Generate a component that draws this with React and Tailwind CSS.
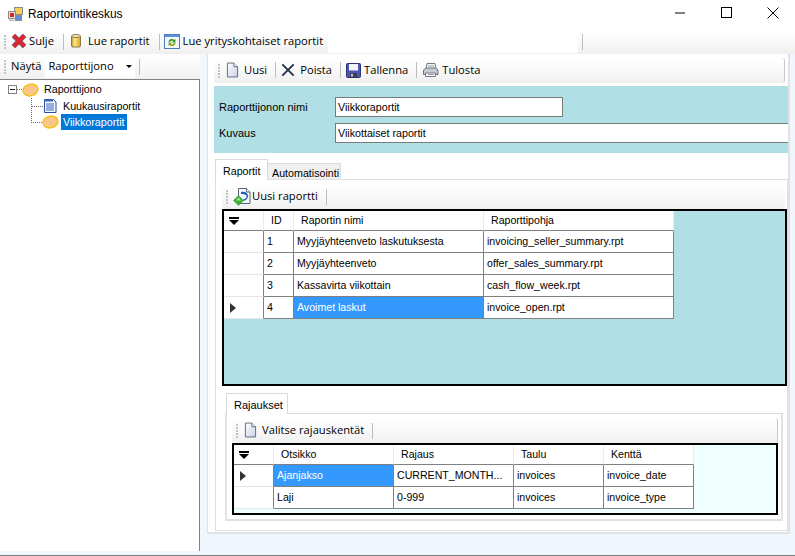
import React from "react";

const seg = "font-['Open_Sans','Liberation_Sans',sans-serif] text-[11.2px] text-black";

const Grip = () => (
  <div className="flex flex-col gap-[1px] mr-[3px] ml-[1px] shrink-0">
    {[0, 1, 2, 3, 4].map((i) => (
      <div key={i} className="w-[2px] h-[2px] bg-[#c4c4c4]" />
    ))}
  </div>
);
const Sep = () => <div className="w-px h-[16px] bg-[#bdbdbd] ml-[8px] mr-[5px] shrink-0" />;

const DocIcon = () => (
  <svg width="13" height="16" viewBox="0 0 14 16" className="shrink-0">
    <defs>
      <linearGradient id="dg" x1="0" y1="0" x2="1" y2="1">
        <stop offset="0" stopColor="#ffffff" />
        <stop offset="1" stopColor="#c9d3e6" />
      </linearGradient>
    </defs>
    <path d="M1.500.500h7l4 4v11h-11z" fill="url(#dg)" stroke="#5a6478" />
    <path d="M8.500.500v4h4" fill="#fff" stroke="#5a6478" />
  </svg>
);
const XIcon = () => (
  <svg width="14" height="14" viewBox="0 0 16 16" className="shrink-0">
    <path d="M1.500 1.500l13 13M14.500 1.500l-13 13" stroke="#1d2b44" strokeWidth="2" />
  </svg>
);
const RedX = () => (
  <svg width="16" height="16" viewBox="0 0 16 16" className="shrink-0">
    <path d="M2.500 2.500l11 11M13.500 2.500l-11 11" stroke="#6f5a70" strokeWidth="5" />
    <path d="M2.500 2.500l11 11M13.500 2.500l-11 11" stroke="#e0262c" strokeWidth="3.200" />
  </svg>
);
const Cyl = () => (
  <svg width="10" height="14" viewBox="0 0 10 14" className="shrink-0">
    <defs>
      <linearGradient id="cy" x1="0" y1="0" x2="1" y2="0">
        <stop offset="0" stopColor="#c9982a" />
        <stop offset="0.35" stopColor="#fbe88a" />
        <stop offset="1" stopColor="#d8a522" />
      </linearGradient>
    </defs>
    <rect x="0.500" y="1.500" width="9" height="11.500" rx="1.500" fill="url(#cy)" stroke="#8a7440" />
    <ellipse cx="5" cy="2" rx="4.500" ry="1.500" fill="#f6edc4" stroke="#8a7440" />
  </svg>
);
const Refresh = () => (
  <svg width="16" height="16" viewBox="0 0 16 16" className="shrink-0">
    <rect x="0.500" y="1.500" width="15" height="14" fill="#f1f7fd" stroke="#4d7cb5" />
    <rect x="1" y="2" width="14" height="2" fill="#5b93d6" />
    <path d="M4.500 9a3.500 3.500 0 0 1 6-2l1-1v3.500H8l1.300-1.200A2 2 0 0 0 6 9z" fill="#3f9b2b" />
    <path d="M11.500 10a3.500 3.500 0 0 1-6 2l-1 1V9.500H8L6.700 10.700A2 2 0 0 0 10 10z" fill="#7fa81f" />
  </svg>
);
const Save = () => (
  <svg width="15" height="15" viewBox="0 0 15 15" className="shrink-0">
    <rect x="0.500" y="0.500" width="14" height="14" rx="1" fill="#4a55b5" stroke="#2c3370" />
    <rect x="3" y="1" width="9" height="6.500" fill="#f2f3fb" />
    <rect x="4" y="10" width="7" height="4.500" fill="#3a3f57" />
    <rect x="5" y="11" width="2" height="2.500" fill="#c5c9d8" />
  </svg>
);
const Printer = () => (
  <svg width="17" height="16" viewBox="0 0 17 16" className="shrink-0">
    <path d="M5 1.500h8l1 5H4z" fill="#f4f5f7" stroke="#737a85" />
    <path d="M1.500 8l2.500-2h10l2 2v4.500h-14.500z" fill="#c6cbd2" stroke="#6b717b" />
    <path d="M3.500 11h10v3.500h-10z" fill="#fff" stroke="#737a85" />
    <path d="M6 4h6M6 12.500h6" stroke="#9aa0aa" />
  </svg>
);
const NewReport = () => (
  <svg width="18" height="18" viewBox="0 0 18 18" className="shrink-0">
    <path d="M5.500.500h8l3.500 3.500v11.500h-11.500z" fill="#f4f7fc" stroke="#5a6478" />
    <path d="M13.500.500v3.500h3.500" fill="#fff" stroke="#5a6478" />
    <path d="M8 4c4-1 7 1 7 4s-3 5-6 5l2-2c2 0 2.500-1.500 2.500-3S11 6 8 6z" fill="#1d5fb4" />
    <path d="M5.500 7.500L10.500 12.500 5.500 17.500 .500 12.500z" fill="#3fae3a" stroke="#2a8a2a" strokeWidth="0.500" />
    <path d="M5.500 9.500L8 12.500H3z" fill="#a5e58c" />
  </svg>
);
const Oval = () => (
  <svg width="17" height="14" viewBox="0 0 17 14" className="shrink-0">
    <ellipse cx="8.500" cy="7" rx="7.500" ry="5.800" fill="#fbc687" stroke="#f5c211" strokeWidth="1.400" transform="rotate(-14 8.500 7)" />
  </svg>
);
const ReportIcon = () => (
  <svg width="14" height="14" viewBox="0 0 14 14" className="shrink-0">
    <path d="M1.500.500h9l2.500 2.500v10.500h-11.500z" fill="#f4f7fd" stroke="#2c4e9c" />
    <path d="M3 5h8M3 7h8M3 9h8M3 11h8" stroke="#3f66bd" />
    <path d="M1 .500h9v2H1z" fill="#3f66bd" />
  </svg>
);
const AppIcon = () => (
  <svg width="15" height="15" viewBox="0 0 15 15" className="shrink-0">
    <rect x="6.500" y="0.500" width="8" height="7" fill="#f7cd52" stroke="#8c8c8c" />
    <rect x="0.500" y="4.500" width="7" height="7" fill="#e5e5e5" stroke="#8c8c8c" />
    <rect x="2" y="6" width="4" height="4" fill="#d9271f" />
    <rect x="7.500" y="8.500" width="6" height="5" fill="#5f8fd8" stroke="#8c8c8c" />
    <rect x="1" y="12.500" width="5" height="1.500" fill="#b5b5b5" />
  </svg>
);
const SortMark = () => (
  <div className="flex flex-col items-center w-[10px]">
    <div className="w-[10px] h-[2px] bg-black" />
    <div className="w-0 h-0 mt-[1px] border-l-[5px] border-r-[5px] border-t-[5px] border-l-transparent border-r-transparent border-t-black" />
  </div>
);
const RowArrow = () => (
  <div className="w-0 h-0 border-t-[5px] border-b-[5px] border-l-[6px] border-t-transparent border-b-transparent border-l-[#333]" />
);

const Tool = ({ icon, label, gap = "gap-[4px]" }) => (
  <div className={`flex items-center ${gap} shrink-0`}>
    {icon}
    <span className="whitespace-nowrap">{label}</span>
  </div>
);

const barBg = "bg-gradient-to-b from-[#ffffff] via-[#f9f9f9] to-[#efefef]";

function Grid({ cols, headers, rows, selected, current, bg, height }) {
  const tmpl = { gridTemplateColumns: cols.map((c) => c + "px").join(" ") };
  return (
    <div className={`border-2 border-black ${bg} ${height} shrink-0 font-['Liberation_Sans',sans-serif] text-[10.6px] text-black`}>
      <div className="grid w-max" style={tmpl}>
        <div className="h-[20px] bg-white border-r border-[#ececec] border-b border-b-[#808080] pl-[5px] pt-[6px]">
          <SortMark />
        </div>
        {headers.map((h) => (
          <div
            key={h}
            className="h-[20px] bg-white border-r border-[#ececec] border-b border-b-[#808080] pl-[7px] pt-[1px] flex items-center whitespace-nowrap"
          >
            {h}
          </div>
        ))}
        {rows.map((r, ri) => (
          <React.Fragment key={ri}>
            <div className="h-[22px] bg-white border-r border-[#808080] border-b border-b-[#e6e6e6] flex items-center pl-[6px]">
              {ri === current && <RowArrow />}
            </div>
            {r.map((c, ci) => (
              <div
                key={ci}
                className={`h-[22px] border-r border-b border-[#808080] flex items-center pl-[3px] whitespace-nowrap overflow-hidden ${
                  selected && selected[0] === ri && selected[1] === ci ? "bg-[#3399ff] text-white" : "bg-white"
                }`}
              >
                {c}
              </div>
            ))}
          </React.Fragment>
        ))}
      </div>
    </div>
  );
}

export default function App() {
  return (
    <div className="w-[795px] h-[556px] overflow-hidden bg-[#eff6fd] flex flex-col font-['Liberation_Sans',sans-serif] text-[10.7px] text-black">
      {/* Title bar */}
      <div className="h-[29px] bg-white flex items-center shrink-0">
        <div className="ml-[8px] mr-[5px]"><AppIcon /></div>
        <span className="text-[11.900px]">Raportointikeskus</span>
        <div className="ml-auto flex items-center">
          <svg width="12" height="12" viewBox="0 0 12 12" className="mr-[35px] -mt-[4px]"><path d="M1 6h10" stroke="#000" strokeWidth="1" /></svg>
          <svg width="11" height="11" viewBox="0 0 11 11" className="mr-[35px] -mt-[4px]"><rect x="0.500" y="0.500" width="10" height="10" fill="none" stroke="#000" /></svg>
          <svg width="12" height="12" viewBox="0 0 12 12" className="mr-[16px] -mt-[4px]"><path d="M.5.500l11 11M11.500.500l-11 11" stroke="#000" /></svg>
        </div>
      </div>

      {/* Main toolbar */}
      <div className={`h-[25px] ${barBg} flex items-center shrink-0 ${seg}`}>
        <div className="pl-[3px] h-full flex items-center">
          <Grip />
        </div>
        <div className="flex items-center h-full w-[319px] pl-[2px]">
          <Tool icon={<RedX />} label="Sulje" gap="gap-[2px]" />
          <div className="w-px h-[16px] bg-[#bdbdbd] ml-[9px] mr-[7px]" />
          <Tool icon={<Cyl />} label="Lue raportit" gap="gap-[7px]" />
          <div className="w-px h-[16px] bg-[#bdbdbd] ml-[9px] mr-[4px]" />
          <Tool icon={<Refresh />} label="Lue yrityskohtaiset raportit" gap="gap-[3px]" />
        </div>
        <div className="w-[250px] h-[23px] bg-white" />
        <div className="w-px h-[16px] bg-[#bdbdbd] ml-[4px]" />
      </div>

      {/* Body */}
      <div className="flex flex-1 min-h-0">
        {/* Left */}
        <div className="w-[200px] shrink-0 flex flex-col">
          <div className={`h-[25px] ${barBg} flex items-center pl-[3px] shrink-0 ${seg}`}>
            <Grip />
            <span className="ml-[2px]">Näytä</span>
            <div className="ml-[4px] w-[90px] h-[23px] bg-white flex items-center pl-[3px] relative">
              Raporttijono
              <div className="absolute left-[81px] top-[10px] w-0 h-0 border-l-[3px] border-r-[3px] border-t-[3px] border-l-transparent border-r-transparent border-t-black" />
            </div>
            <div className="w-px h-[16px] bg-[#bdbdbd] ml-[4px]" />
          </div>
          <div className="h-[472px] bg-white border-t border-r border-[#808080] pt-[1px] relative">
            <div className="flex items-center h-[17px] pl-[8px]">
              <div className="w-[9px] h-[9px] border border-[#808080] flex items-center justify-center shrink-0 bg-white">
                <div className="w-[5px] h-px bg-[#222]" />
              </div>
              <div className="w-[5px] border-t border-dotted border-[#666]" />
              <Oval />
              <span className="ml-[5px]">Raporttijono</span>
            </div>
            <div className="flex items-center h-[16px] pl-[31px]">
              <div className="w-[12px] border-t border-dotted border-[#666]" />
              <ReportIcon />
              <span className="ml-[6px]">Kuukausiraportit</span>
            </div>
            <div className="flex items-center h-[16px] pl-[31px]">
              <div className="w-[11px] border-t border-dotted border-[#666]" />
              <Oval />
              <span className="ml-[2px] bg-[#0078d7] text-white px-[2px] h-[16px] leading-[16px]">Viikkoraportit</span>
            </div>
            <div className="absolute left-[31px] top-[18px] h-[25px] border-l border-dotted border-[#666]" />
          </div>
        </div>

        {/* Right */}
        <div className="w-[583px] ml-[7px] h-[480px] bg-white border-r-2 border-b-2 border-l border-[#e2e2e2] flex flex-col pl-[6px]">
          <div className={`mt-[4px] mr-[3px] h-[25px] rounded-[3px] ${barBg} border-r border-[#c8c8c8] flex items-center pl-[3px] shrink-0 ${seg}`}>
            <Grip />
            <div className="ml-[3px] flex items-center">
              <Tool icon={<DocIcon />} label="Uusi" gap="gap-[5px]" />
              <Sep />
              <Tool icon={<XIcon />} label="Poista" gap="gap-[5px]" />
              <Sep />
              <Tool icon={<Save />} label="Tallenna" gap="gap-[3px]" />
              <Sep />
              <Tool icon={<Printer />} label="Tulosta" gap="gap-[3px]" />
            </div>
          </div>

          <div className="mt-[3px] h-[67px] bg-[#b0dfe5] pl-[5px] pt-[11px] flex flex-col gap-[6px] shrink-0">
            <div className="flex items-center h-[20px]">
              <span className="w-[116px] text-[11px]">Raporttijonon nimi</span>
              <div className="w-[228px] h-[20px] bg-white border border-[#7a7a7a] pl-[2px] leading-[18px]">Viikkoraportit</div>
            </div>
            <div className="flex items-center h-[20px]">
              <span className="w-[116px] text-[11px]">Kuvaus</span>
              <div className="flex-1 h-[20px] bg-white border-y border-l border-[#7a7a7a] pl-[2px] leading-[18px]">Viikottaiset raportit</div>
            </div>
          </div>

          {/* Tabs */}
          <div className="mt-[6px] flex items-end h-[21px] shrink-0 pl-[1px]">
            <div className="w-[53px] h-[21px] bg-white border-x border-t border-[#d9d9d9] pl-[7px] pt-[3px] relative z-10">Raportit</div>
            <div className="w-[73px] h-[17px] bg-[#f0f0f0] border-r border-t border-b border-[#d9d9d9] pl-[4px] pt-[1px]">Automatisointi</div>
          </div>
          <div className="ml-[1px] border border-[#e0e0e0] -mt-[1px] h-[352px] pl-[6px] flex flex-col">
            <div className={`mt-[4px] mr-[2px] h-[25px] rounded-[3px] ${barBg} flex items-center pl-[3px] shrink-0 ${seg}`}>
              <Grip />
              <div className="ml-[2px]"><Tool icon={<NewReport />} label="Uusi raportti" gap="gap-[1px]" /></div>
              <Sep />
            </div>
            <Grid
              cols={[40, 30, 190, 190]}
              headers={["ID", "Raportin nimi", "Raporttipohja"]}
              rows={[
                ["1", "Myyjäyhteenveto laskutuksesta", "invoicing_seller_summary.rpt"],
                ["2", "Myyjäyhteenveto", "offer_sales_summary.rpt"],
                ["3", "Kassavirta viikottain", "cash_flow_week.rpt"],
                ["4", "Avoimet laskut", "invoice_open.rpt"],
              ]}
              selected={[3, 1]}
              current={3}
              bg="bg-[#b0dfe5]"
              height="h-[177px]"
            />
            {/* Sub tabs */}
            <div className="mt-[7px] ml-[4px] w-[62px] h-[21px] bg-white border-x border-t border-[#d9d9d9] pl-[7px] pt-[3px] shrink-0 relative z-10 text-[11px]">Rajaukset</div>
            <div className="ml-[3px] mr-[4px] -mt-[1px] h-[108px] border-2 border-[#e2e2e2] border-t border-t-[#d9d9d9] pl-[5px] pr-[3px] flex flex-col">
              <div className={`mt-[4px] h-[25px] rounded-[3px] ${barBg} border-r border-[#c8c8c8] flex items-center pl-[3px] shrink-0 ${seg}`}>
                <Grip />
                <div className="ml-[3px]"><Tool icon={<DocIcon />} label="Valitse rajauskentät" gap="gap-[5px]" /></div>
                <Sep />
              </div>
              <Grid
                cols={[40, 120, 120, 90, 90]}
                headers={["Otsikko", "Rajaus", "Taulu", "Kenttä"]}
                rows={[
                  ["Ajanjakso", "CURRENT_MONTH...", "invoices", "invoice_date"],
                  ["Laji", "0-999", "invoices", "invoice_type"],
                ]}
                selected={[0, 0]}
                current={0}
                bg="bg-[#f0ffff]"
                height="h-[72px]"
              />
            </div>
          </div>
        </div>
      </div>
      <div className="h-[1px] bg-[#808080] shrink-0" />
    </div>
  );
}
